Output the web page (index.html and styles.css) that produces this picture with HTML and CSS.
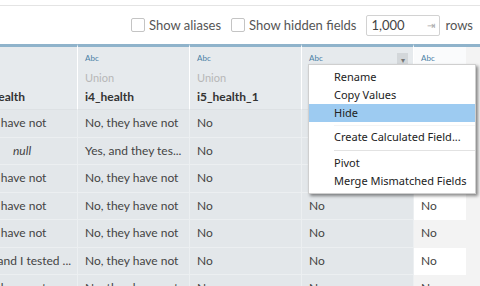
FILE: index.html
```html
<!DOCTYPE html>
<html lang="en">

<head>
    <meta charset="UTF-8">
    <title>Data Source Grid</title>
    <link rel="stylesheet" href="styles.css">
</head>

<body>
    <div class="topline"></div>
    <div class="toolbar">
        <label class="check"><span class="box"></span>Show aliases</label>
        <label class="check"><span class="box"></span>Show hidden fields</label>
        <div class="rows-input"><span>1,000</span><span class="arrow">&#8677;</span></div>
        <span class="rows-label">rows</span>
    </div>

    <div class="grid">
        <!-- header -->
        <div class="head">
            <p class="type">Abc</p>
            <p class="src">Union</p>
            <p class="name">ever_health</p>
        </div>
        <div class="head">
            <p class="type">Abc</p>
            <p class="src">Union</p>
            <p class="name">i4_health</p>
        </div>
        <div class="head">
            <p class="type">Abc</p>
            <p class="src">Union</p>
            <p class="name">i5_health_1</p>
        </div>
        <div class="head selected">
            <p class="type">Abc</p>
            <span class="drop">&#9662;</span>
        </div>
        <div class="head last">
            <p class="type">Abc</p>
        </div>

        <div class="cell">No, they have not</div>
        <div class="cell">No, they have not</div>
        <div class="cell">No</div>
        <div class="cell"></div>
        <div class="cell last"></div>

        <div class="cell null">null</div>
        <div class="cell tight">Yes, and they tes...</div>
        <div class="cell">No</div>
        <div class="cell"></div>
        <div class="cell last alt"></div>

        <div class="cell">No, they have not</div>
        <div class="cell">No, they have not</div>
        <div class="cell">No</div>
        <div class="cell"></div>
        <div class="cell last"></div>

        <div class="cell">No, they have not</div>
        <div class="cell">No, they have not</div>
        <div class="cell">No</div>
        <div class="cell">No</div>
        <div class="cell last">No</div>

        <div class="cell">No, they have not</div>
        <div class="cell">No, they have not</div>
        <div class="cell">No</div>
        <div class="cell">No</div>
        <div class="cell last alt">No</div>

        <div class="cell cut">Yes, and I tested ...</div>
        <div class="cell">No, they have not</div>
        <div class="cell">No</div>
        <div class="cell">No</div>
        <div class="cell last">No</div>

        <div class="cell">No, they have not</div>
        <div class="cell">No, they have not</div>
        <div class="cell">No</div>
        <div class="cell">No</div>
        <div class="cell last alt">No</div>
    </div>

    <ul class="menu">
        <li>Rename</li>
        <li>Copy Values</li>
        <li class="active">Hide</li>
        <li class="sep"></li>
        <li>Create Calculated Field...</li>
        <li class="sep wide"></li>
        <li>Pivot</li>
        <li>Merge Mismatched Fields</li>
    </ul>
</body>

</html>
```

FILE: styles.css
```css
body {
    margin: 0;
    width: 480px;
    height: 286px;
    overflow: hidden;
    position: relative;
    background-color: #f3f3f3;
    font-family: Lato, "Liberation Sans", sans-serif;
    color: #333;
}

p {
    margin: 0;
}

.topline {
    height: 5px;
    background-color: #fff;
    border-bottom: 1px solid #e4e4e4;
}

.toolbar {
    height: 38px;
    background-color: #fff;
    display: flex;
    align-items: center;
    justify-content: flex-end;
    padding-right: 7px;
    font-size: 13px;
    color: #555;
}

.check {
    display: flex;
    align-items: center;
    margin-right: 10px;
}

.box {
    width: 12px;
    height: 12px;
    border: 1px solid #c4c4c4;
    border-radius: 2px;
    margin-right: 4px;
}

.rows-input {
    width: 64px;
    height: 19px;
    border: 1px solid #d2d2d2;
    border-radius: 2px;
    display: flex;
    align-items: center;
    justify-content: space-between;
    padding: 0 4px;
    margin-right: 5px;
    color: #444;
}

.arrow {
    font-size: 10px;
    color: #aaa;
}

.grid {
    display: grid;
    grid-template-columns: 132px 112px 112px 112px 52px;
    grid-template-rows: 66px repeat(7, 27.5px);
    margin-left: -54px;
    width: 534px;
    height: 246px;
    overflow: hidden;
    font-size: 12px;
    background: linear-gradient(#8fb3cb 3px, transparent 3px);
}

.head {
    position: relative;
    background-color: #e6eaed;
    border-top: 3px solid #8fb3cb;
    border-right: 1px solid #fff;
    border-bottom: 1px solid #dde1e4;
    padding: 6px 7px 0;
}

.head.last {
    background-color: #fafbfc;
    border-right: none;
}

.type {
    font-size: 8px;
    color: #4b7fa6;
    height: 18px;
}

.src {
    font-size: 11px;
    color: #b7b7b7;
    height: 18px;
}

.name {
    font-size: 12px;
    font-weight: bold;
    color: #333;
}

.head:first-child .name {
    text-align: right;
    padding-right: 45px;
}

.drop {
    position: absolute;
    right: 5px;
    top: 6px;
    width: 11px;
    height: 14px;
    background-color: #d3d7da;
    color: #777;
    font-size: 8px;
    text-align: center;
    line-height: 14px;
}

.cell {
    background-color: #e3e7ea;
    border-right: 1px solid #eceff1;
    border-bottom: 1px solid #eceff1;
    padding: 0 8px 0 7px;
    line-height: 26px;
    white-space: nowrap;
    overflow: hidden;
    text-overflow: ellipsis;
    color: #444;
}

.cell.tight {
    padding-right: 0;
    text-overflow: clip;
}

.cell.null {
    font-style: italic;
    padding-left: 67px;
}

.cell.cut {
    padding-left: 28px;
    text-overflow: clip;
}

.cell.last {
    background-color: #fff;
    border: none;
}

.cell.last.alt {
    background-color: #f3f3f3;
}

.menu {
    position: absolute;
    left: 308px;
    top: 64px;
    width: 166px;
    margin: 0;
    padding: 3px 0 3px;
    list-style: none;
    background-color: #fff;
    border: 1px solid #cfcfcf;
    box-shadow: 2px 2px 3px rgba(0, 0, 0, 0.45);
    font-family: "Noto Sans", sans-serif;
    font-size: 11px;
    color: #222;
}

.menu li {
    padding-left: 25px;
    line-height: 18px;
}

.menu li.active {
    background-color: #9dcbf1;
}

.menu li.sep {
    height: 1px;
    margin: 3px 0 2px 25px;
    background-color: #f4f4f4;
}

.menu li.sep.wide {
    margin: 4px 0 3px 25px;
    background-color: #e2e2e2;
}
```
